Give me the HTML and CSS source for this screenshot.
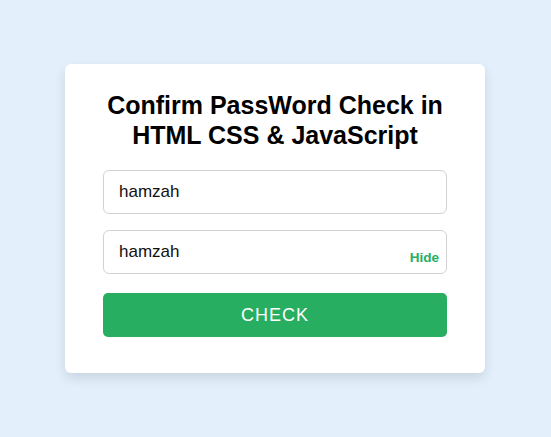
FILE: index.html
```html
<!DOCTYPE html>
<html lang="en">
<head>
<meta charset="utf-8">
<title>Confirm Password Check</title>
<link rel="stylesheet" href="styles.css">
</head>
<body>
  <div class="card">
    <h2 class="title">Confirm PassWord Check in HTML CSS &amp; JavaScript</h2>
    <form class="form">
      <div class="field">
        <input class="input" type="text" value="hamzah">
      </div>
      <div class="field">
        <input class="input" type="text" value="hamzah">
        <span class="toggle">Hide</span>
      </div>
      <button class="btn" type="button">CHECK</button>
    </form>
  </div>
</body>
</html>
```
FILE: styles.css
```css
* { box-sizing: border-box; }
html, body { height: 100%; }
body {
  margin: 0;
  padding-right: 1px;
  background: #e3f0fc;
  font-family: "Liberation Sans", Arial, sans-serif;
  display: flex;
  align-items: center;
  justify-content: center;
}
.card {
  width: 420px;
  background: #fff;
  border-radius: 6px;
  padding: 26px 38px 36px;
  box-shadow: 0 5px 12px rgba(0, 0, 0, 0.12);
}
.title {
  margin: 0;
  font-size: 25px;
  line-height: 30px;
  font-weight: 700;
  text-align: center;
  color: #000;
}
.form {
  margin-top: 20px;
  display: flex;
  flex-direction: column;
}
.field {
  position: relative;
  margin-bottom: 16px;
}
.field + .field { margin-bottom: 19px; }
.input {
  display: block;
  width: 100%;
  height: 44px;
  border: 1px solid #d2d2d2;
  border-radius: 6px;
  padding: 0 15px;
  font-family: inherit;
  font-size: 17px;
  color: #111;
  outline: none;
}
.toggle {
  position: absolute;
  right: 8px;
  bottom: 9px;
  font-size: 13.5px;
  font-weight: 700;
  color: #27ae60;
}
.btn {
  height: 44px;
  border: none;
  border-radius: 5px;
  background: #27ae60;
  color: #fff;
  font-family: inherit;
  font-size: 18px;
  letter-spacing: 1px;
}
```
